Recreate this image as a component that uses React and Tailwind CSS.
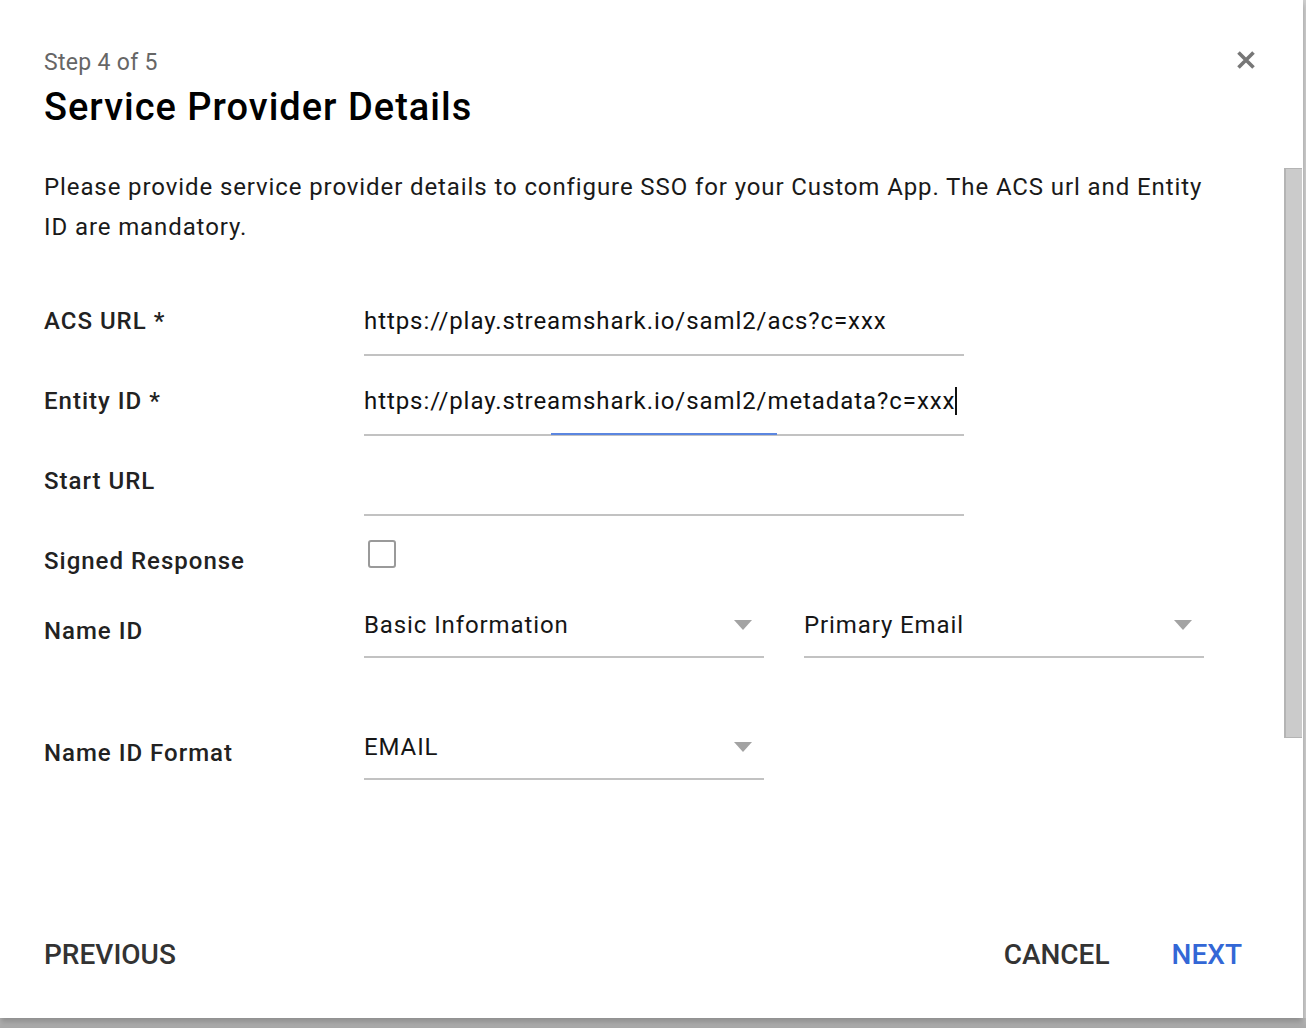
import React from "react";

const font = { fontFamily: "Roboto, 'Noto Sans', sans-serif" };

function Arrow() {
  return (
    <svg width="18" height="10" viewBox="0 0 18 10" className="shrink-0">
      <path d="M0 0 L18 0 L9 10 Z" fill="#a3a3a3" />
    </svg>
  );
}

function TextField({ value, focused }) {
  return (
    <div className="w-[600px]">
      <div className="h-[40px] leading-[40px] text-[24px] tracking-[0.93px] text-[#111] flex items-center whitespace-nowrap">
        {value}
        {focused && <span className="inline-block w-[2px] h-[28px] bg-[#111] ml-[0px]" />}
      </div>
      <div className="mt-[13px] h-[2px] bg-[#c2c2c2] relative">
        {focused && <div className="absolute left-[187px] top-[-1px] w-[226px] h-[2px] bg-[#5b86e0]" />}
      </div>
    </div>
  );
}

function Select({ value }) {
  return (
    <div className="w-[400px]">
      <div className="h-[40px] flex items-center justify-between pr-[12px]">
        <span className="text-[24px] leading-[40px] tracking-[0.9px] text-[#161616]">{value}</span>
        <Arrow />
      </div>
      <div className="mt-[11px] h-[2px] bg-[#c2c2c2]" />
    </div>
  );
}

function Label({ children, className = "" }) {
  return (
    <div className={"w-[320px] shrink-0 text-[24px] leading-[40px] tracking-[1px] font-medium text-[#222] " + className}>
      {children}
    </div>
  );
}

export default function App() {
  return (
    <div className="w-[1306px] h-[1028px] bg-[#cfcfcf] overflow-hidden" style={font}>
      <div className="relative w-[1303px] h-[1018px] bg-white flex flex-col shadow-[0_4px_6px_rgba(0,0,0,0.25)]">
        {/* scrollbar thumb */}
        <div className="absolute left-[1284px] top-[168px] w-[18px] h-[570px] bg-[#cbcbcb] border-l-2 border-t border-b border-[#b4b4b4]" />

        <div className="px-[44px]">
          <div className="flex justify-between">
            <div>
              <div className="pt-[49px] text-[23px] leading-[28px] tracking-[0.3px] text-[#666]">Step 4 of 5</div>
              <div className="mt-[6px] text-[38px] leading-[48px] font-medium text-black tracking-[1px]">
                Service Provider Details
              </div>
            </div>
            <button className="mt-[50px] mr-[3px] w-[20px] h-[20px]">
              <svg width="20" height="20" viewBox="0 0 20 20">
                <path d="M2.5 2.5 L17.5 17.5 M17.5 2.5 L2.5 17.5" stroke="#777" strokeWidth="3.6" strokeLinecap="butt" />
              </svg>
            </button>
          </div>

          <p className="mt-[36px] w-[1175px] text-[24px] leading-[40px] tracking-[0.9px] text-[#1a1a1a]">
            Please provide service provider details to configure SSO for your Custom App. The ACS url and Entity ID are mandatory.
          </p>

          <div className="mt-[54px] flex flex-col">
            <div className="flex items-start">
              <Label>ACS URL *</Label>
              <TextField value="https://play.streamshark.io/saml2/acs?c=xxx" />
            </div>
            <div className="flex items-start mt-[25px]">
              <Label>Entity ID *</Label>
              <TextField value="https://play.streamshark.io/saml2/metadata?c=xxx" focused />
            </div>
            <div className="flex items-start mt-[25px]">
              <Label>Start URL</Label>
              <TextField value="" />
            </div>
            <div className="flex items-start mt-[25px]">
              <Label>Signed Response</Label>
              <div className="ml-[4px] mt-[-1px] w-[28px] h-[28px] border-2 border-[#9a9a9a] rounded-[3px]" />
            </div>
            <div className="flex items-start mt-[24px]">
              <Label className="mt-[6px]">Name ID</Label>
              <Select value="Basic Information" />
              <div className="ml-[40px]">
                <Select value="Primary Email" />
              </div>
            </div>
            <div className="flex items-start mt-[69px]">
              <Label className="mt-[6px]">Name ID Format</Label>
              <Select value="EMAIL" />
            </div>
          </div>
        </div>

        <div className="mt-auto mb-[27px] h-[72px] flex items-center justify-between pl-[44px] pr-[61px]">
          <button className="text-[28px] font-medium text-[#333]">PREVIOUS</button>
          <div className="flex items-center gap-[62px]">
            <button className="text-[28px] font-medium text-[#333]">CANCEL</button>
            <button className="text-[28px] font-medium text-[#3367d6]">NEXT</button>
          </div>
        </div>
      </div>
      <div className="h-[10px] bg-gradient-to-b from-[#bdbdbd] to-[#a9a9a9]" />
    </div>
  );
}
